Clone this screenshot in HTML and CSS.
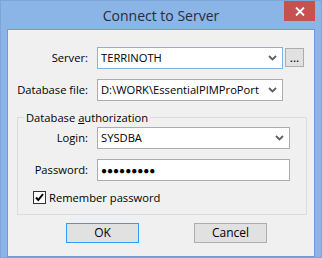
FILE: index.html
```html
<!DOCTYPE html>
<html>
<head>
<meta charset="utf-8">
<title>Connect to Server</title>
<link rel="stylesheet" href="styles.css">
</head>
<body>
<div class="window">
  <div class="titlebar">
    <div class="title">Connect to Server</div>
    <div class="close">
      <svg width="10" height="9" viewBox="0 0 10 9"><path d="M1 0.5 L9 8.5 M9 0.5 L1 8.5" stroke="#fff" stroke-width="1.8"/></svg>
    </div>
  </div>
  <div class="client">
    <div class="row">
      <label class="label">Server:</label>
      <div class="combo focused"><span class="value">TERRINOTH</span><svg class="chev" width="9" height="6" viewBox="0 0 9 6"><path d="M1 1 L4.5 4.5 L8 1" fill="none" stroke="#606060" stroke-width="1.8"/></svg></div>
      <button class="browse">...</button>
    </div>
    <div class="row">
      <label class="label">Database file:</label>
      <div class="combo"><span class="value">D:\WORK\EssentialPIMProPort</span><svg class="chev" width="9" height="6" viewBox="0 0 9 6"><path d="M1 1 L4.5 4.5 L8 1" fill="none" stroke="#606060" stroke-width="1.8"/></svg></div>
    </div>
    <fieldset class="group">
      <legend>Database <u>a</u>uthorization</legend>
      <div class="row grow">
        <label class="label">Login:</label>
        <div class="combo wide"><span class="value">SYSDBA</span><svg class="chev" width="9" height="6" viewBox="0 0 9 6"><path d="M1 1 L4.5 4.5 L8 1" fill="none" stroke="#606060" stroke-width="1.8"/></svg></div>
      </div>
      <div class="row grow">
        <label class="label">Password:</label>
        <div class="combo wide"><span class="value dots">●●●●●●●●●</span></div>
      </div>
      <div class="check-row">
        <span class="checkbox"><svg width="11" height="11" viewBox="0 0 11 11"><path d="M2 5.5 L4.3 8 L9 2" fill="none" stroke="#000" stroke-width="2"/></svg></span>
        <span class="check-label">Remember password</span>
      </div>
    </fieldset>
    <div class="buttons">
      <button class="btn default">OK</button>
      <button class="btn">Cancel</button>
    </div>
  </div>
</div>
</body>
</html>
```
FILE: styles.css
```css
html, body {
  margin: 0;
  padding: 0;
}
body {
  width: 322px;
  height: 258px;
  background: #8ab5e6;
  font-family: "Open Sans", "Noto Sans", sans-serif;
  font-size: 11.2px;
  color: #000;
  overflow: hidden;
}
.window {
  width: 322px;
  height: 258px;
  box-sizing: border-box;
  border: 1px solid #7aa6db;
  display: flex;
  flex-direction: column;
}
.titlebar {
  height: 29px;
  display: grid;
  grid-template-columns: 1fr auto 1fr;
  align-items: start;
}
.title {
  grid-column: 2;
  font-size: 14px;
  color: #2b2b3a;
  line-height: 20px;
  padding-top: 5px;
}
.close {
  grid-column: 3;
  justify-self: end;
  width: 31px;
  height: 20px;
  margin-right: 6px;
  background: #c75050;
  display: flex;
  align-items: center;
  justify-content: center;
}
.client {
  margin: 0 6px 0 6px;
  height: 219px;
  background: #f0f0f0;
  border: 1px solid #6e9bd3;
  padding-top: 17px;
  box-sizing: content-box;
}
.row {
  display: flex;
  align-items: center;
  height: 22px;
  margin-bottom: 10px;
}
.label {
  width: 80px;
  text-align: right;
  margin-right: 9px;
  white-space: nowrap;
}
.grow .label {
  width: 70px;
}
.combo {
  width: 186px;
  height: 22px;
  box-sizing: border-box;
  border: 1px solid #acacac;
  background: #fff;
  display: flex;
  align-items: center;
  padding-left: 3px;
  padding-right: 5px;
  overflow: hidden;
}
.combo.focused {
  border-color: #7eb4ea;
}
.combo.wide {
  width: 193px;
}
.value {
  flex: 1;
  white-space: nowrap;
  overflow: hidden;
  min-width: 0;
}
.dots {
  font-size: 10px;
  letter-spacing: 0;
}
.chev {
  flex: none;
  margin-left: 4px;
}
.browse {
  width: 19px;
  height: 19px;
  margin-left: 2px;
  padding: 0;
  border: 1px solid #adadad;
  background: #e1e1e1;
  font-family: inherit;
  font-size: 12px;
  line-height: 12px;
  color: #000;
}
.group {
  margin: 0 0 0 9px;
  width: 290px;
  box-sizing: border-box;
  border: 1px solid #dcdcdc;
  padding: 2px 0 9px 0;
  height: 104px;
}
.group legend {
  padding: 0 2px;
  margin-left: 6px;
  line-height: 14px;
}
.check-row {
  display: flex;
  align-items: center;
  padding-left: 15px;
  margin-top: -1px;
}
.checkbox {
  width: 13px;
  height: 13px;
  box-sizing: border-box;
  border: 1px solid #333;
  background: #fff;
  display: flex;
  align-items: center;
  justify-content: center;
}
.check-label {
  margin-left: 3px;
}
.buttons {
  display: flex;
  gap: 55px;
  padding-left: 58px;
  margin-top: 8px;
}
.btn {
  width: 73px;
  height: 20px;
  padding: 0;
  border: 1px solid #adadad;
  background: #e1e1e1;
  font-family: inherit;
  font-size: 12px;
  color: #000;
}
.btn.default {
  border-color: #3399ff;
}
```
